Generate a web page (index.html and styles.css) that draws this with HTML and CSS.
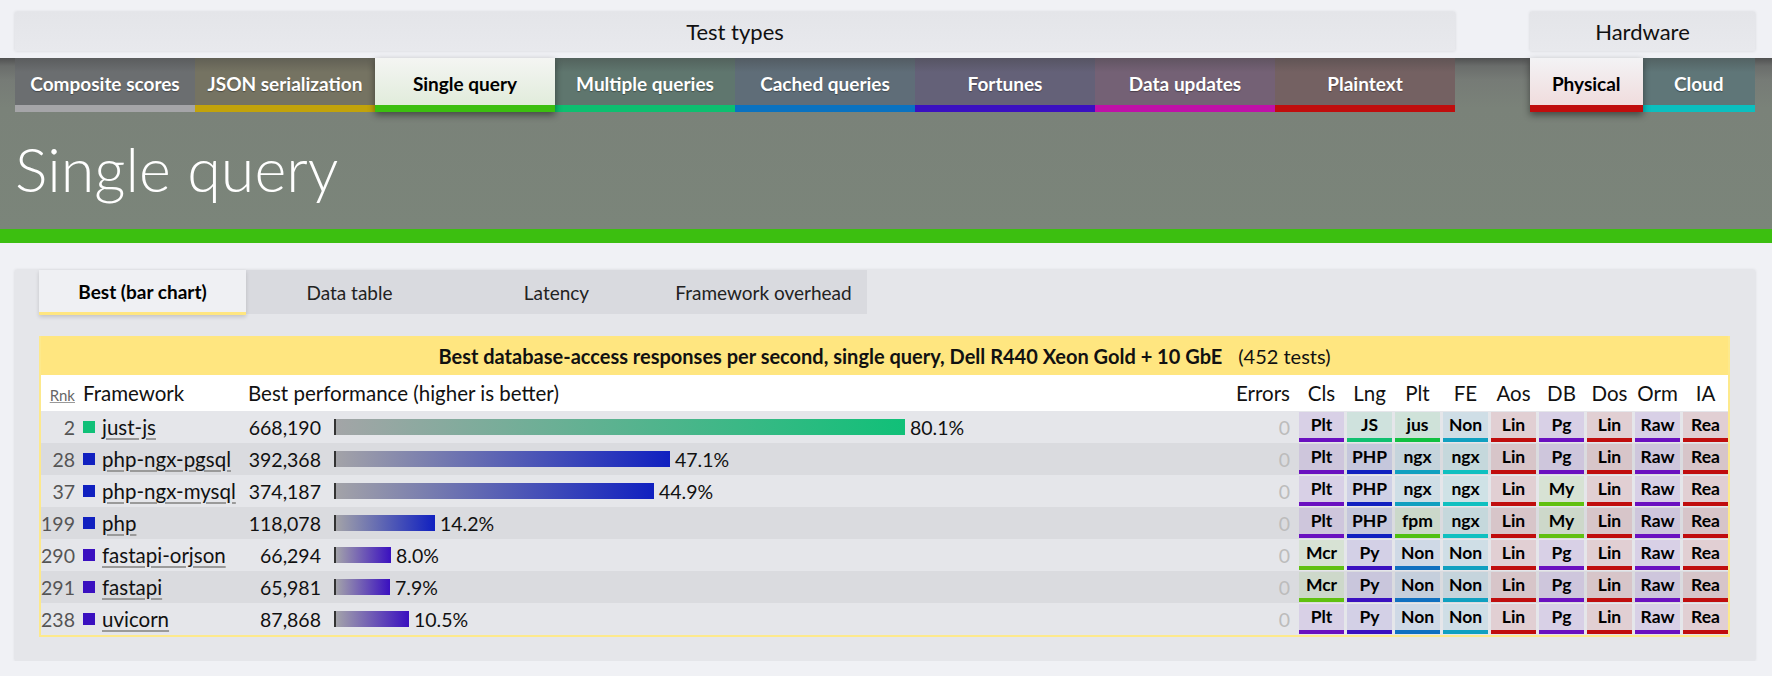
FILE: index.html
```html
<!DOCTYPE html>
<html lang="en">
<head>
<meta charset="utf-8">
<title>Single query</title>
<link rel="stylesheet" href="styles.css">
</head>
<body>
<div class="top">
  <div class="group test-types">Test types</div>
  <div class="group hardware">Hardware</div>
</div>
<div class="band">
  <nav class="tabs">
    <div class="tabset">
      <a class="tab t-composite">Composite scores</a>
      <a class="tab t-json">JSON serialization</a>
      <a class="tab t-single active">Single query</a>
      <a class="tab t-multiple">Multiple queries</a>
      <a class="tab t-cached">Cached queries</a>
      <a class="tab t-fortunes">Fortunes</a>
      <a class="tab t-updates">Data updates</a>
      <a class="tab t-plaintext">Plaintext</a>
    </div>
    <div class="tabset hw">
      <a class="tab t-physical active">Physical</a>
      <a class="tab t-cloud">Cloud</a>
    </div>
  </nav>
  <h1 class="title">Single query</h1>
</div>
<div class="greenbar"></div>

<section class="panel">
  <div class="subtabs">
    <div class="subtab active">Best (bar chart)</div>
    <div class="subtab">Data table</div>
    <div class="subtab">Latency</div>
    <div class="subtab">Framework overhead</div>
  </div>

  <div class="results">
    <div class="caption"><b>Best database-access responses per second, single query, Dell R440 Xeon Gold + 10 GbE</b><span class="count">(452 tests)</span></div>

    <div class="row head">
      <div class="rnk"><span class="rnk-label">Rnk</span></div>
      <div class="fw-head">Framework</div>
      <div class="perf-head">Best performance (higher is better)</div>
      <div class="err">Errors</div>
      <div class="badges">
        <div class="h">Cls</div><div class="h">Lng</div><div class="h">Plt</div><div class="h">FE</div><div class="h">Aos</div><div class="h">DB</div><div class="h">Dos</div><div class="h">Orm</div><div class="h">IA</div>
      </div>
    </div>

    <div class="row">
      <div class="rnk">2</div><div class="sq c-green"></div><div class="name"><a>just-js</a></div>
      <div class="val">668,190</div>
      <div class="barcell"><div class="bar g-green" style="width:571px"></div><span class="pct">80.1%</span></div>
      <div class="err zero">0</div>
      <div class="badges">
        <div class="b k-purple">Plt</div><div class="b k-js">JS</div><div class="b k-jus">jus</div><div class="b k-teal">Non</div><div class="b k-red">Lin</div><div class="b k-purple">Pg</div><div class="b k-red">Lin</div><div class="b k-purple">Raw</div><div class="b k-red">Rea</div>
      </div>
    </div>

    <div class="row">
      <div class="rnk">28</div><div class="sq c-blue"></div><div class="name"><a>php-ngx-pgsql</a></div>
      <div class="val">392,368</div>
      <div class="barcell"><div class="bar g-blue" style="width:336px"></div><span class="pct">47.1%</span></div>
      <div class="err zero">0</div>
      <div class="badges">
        <div class="b k-purple">Plt</div><div class="b k-blue">PHP</div><div class="b k-teal">ngx</div><div class="b k-cyan">ngx</div><div class="b k-red">Lin</div><div class="b k-purple">Pg</div><div class="b k-red">Lin</div><div class="b k-purple">Raw</div><div class="b k-red">Rea</div>
      </div>
    </div>

    <div class="row">
      <div class="rnk">37</div><div class="sq c-blue"></div><div class="name"><a>php-ngx-mysql</a></div>
      <div class="val">374,187</div>
      <div class="barcell"><div class="bar g-blue" style="width:320px"></div><span class="pct">44.9%</span></div>
      <div class="err zero">0</div>
      <div class="badges">
        <div class="b k-purple">Plt</div><div class="b k-blue">PHP</div><div class="b k-teal">ngx</div><div class="b k-cyan">ngx</div><div class="b k-red">Lin</div><div class="b k-lime">My</div><div class="b k-red">Lin</div><div class="b k-purple">Raw</div><div class="b k-red">Rea</div>
      </div>
    </div>

    <div class="row">
      <div class="rnk">199</div><div class="sq c-blue"></div><div class="name"><a>php</a></div>
      <div class="val">118,078</div>
      <div class="barcell"><div class="bar g-blue" style="width:101px"></div><span class="pct">14.2%</span></div>
      <div class="err zero">0</div>
      <div class="badges">
        <div class="b k-purple">Plt</div><div class="b k-blue">PHP</div><div class="b k-fpm">fpm</div><div class="b k-cyan">ngx</div><div class="b k-red">Lin</div><div class="b k-lime">My</div><div class="b k-red">Lin</div><div class="b k-purple">Raw</div><div class="b k-red">Rea</div>
      </div>
    </div>

    <div class="row">
      <div class="rnk">290</div><div class="sq c-indigo"></div><div class="name"><a>fastapi-orjson</a></div>
      <div class="val">66,294</div>
      <div class="barcell"><div class="bar g-indigo" style="width:57px"></div><span class="pct">8.0%</span></div>
      <div class="err zero">0</div>
      <div class="badges">
        <div class="b k-lime">Mcr</div><div class="b k-indigo">Py</div><div class="b k-azure">Non</div><div class="b k-teal">Non</div><div class="b k-red">Lin</div><div class="b k-purple">Pg</div><div class="b k-red">Lin</div><div class="b k-purple">Raw</div><div class="b k-red">Rea</div>
      </div>
    </div>

    <div class="row">
      <div class="rnk">291</div><div class="sq c-indigo"></div><div class="name"><a>fastapi</a></div>
      <div class="val">65,981</div>
      <div class="barcell"><div class="bar g-indigo" style="width:56px"></div><span class="pct">7.9%</span></div>
      <div class="err zero">0</div>
      <div class="badges">
        <div class="b k-lime">Mcr</div><div class="b k-indigo">Py</div><div class="b k-azure">Non</div><div class="b k-teal">Non</div><div class="b k-red">Lin</div><div class="b k-purple">Pg</div><div class="b k-red">Lin</div><div class="b k-purple">Raw</div><div class="b k-red">Rea</div>
      </div>
    </div>

    <div class="row">
      <div class="rnk">238</div><div class="sq c-indigo"></div><div class="name"><a>uvicorn</a></div>
      <div class="val">87,868</div>
      <div class="barcell"><div class="bar g-indigo" style="width:75px"></div><span class="pct">10.5%</span></div>
      <div class="err zero">0</div>
      <div class="badges">
        <div class="b k-purple">Plt</div><div class="b k-indigo">Py</div><div class="b k-azure">Non</div><div class="b k-teal">Non</div><div class="b k-red">Lin</div><div class="b k-purple">Pg</div><div class="b k-red">Lin</div><div class="b k-purple">Raw</div><div class="b k-red">Rea</div>
      </div>
    </div>
  </div>
</section>
</body>
</html>
```

FILE: styles.css
```css
* { box-sizing: border-box; }
html, body { margin: 0; padding: 0; }
body {
  background: #f0f1f5;
  font-family: "Lato", "Noto Sans", sans-serif;
  color: #111;
}

/* top group labels */
.top {
  display: flex;
  justify-content: space-between;
  padding: 12px 17px 7px 15px;
}
.group {
  height: 39px;
  line-height: 39px;
  text-align: center;
  font-size: 22px;
  background: linear-gradient(#e4e5e9, #e8e9ed);
  box-shadow: 0 0 3px rgba(0,0,0,0.12);
}
.test-types { width: 1440px; }
.hardware { width: 225px; }

/* dark band with tabs */
.band {
  background: linear-gradient(#505151 0, #6a6d6b 8px, #767b76 22px, #7a8279 50px, #7b857a 100%);
  padding: 0 17px 0 15px;
}
.tabs {
  display: flex;
  justify-content: space-between;
  height: 54px;
}
.tabset { display: flex; }
.tab {
  width: 180px;
  height: 54px;
  border-bottom: 7px solid #a5a5a8;
  display: flex;
  align-items: center;
  justify-content: center;
  padding-top: 3px;
  color: #fff;
  font-weight: 700;
  font-size: 19px;
  text-shadow: 0 1px 1px rgba(0,0,0,0.35);
  background-image: linear-gradient(rgba(60,60,60,0.35), rgba(60,60,60,0) 14px);
}
.hw .tab { width: 112.5px; }
.t-composite { background-color: #6b6e70; border-bottom-color: #a5a5a8; }
.t-json      { background-color: #757362; border-bottom-color: #c2a30b; }
.t-single    { border-bottom-color: #3cbf10; }
.t-multiple  { background-color: #5f766e; border-bottom-color: #0dbf70; }
.t-cached    { background-color: #5f6d78; border-bottom-color: #0a72c0; }
.t-fortunes  { background-color: #646178; border-bottom-color: #3a10c0; }
.t-updates   { background-color: #746175; border-bottom-color: #c010a8; }
.t-plaintext { background-color: #746162; border-bottom-color: #c00d0d; }
.t-physical  { border-bottom-color: #c00d0d; }
.t-cloud     { background-color: #5f7678; border-bottom-color: #0bbfbf; }
.tab.active {
  color: #000;
  text-shadow: none;
  position: relative;
  z-index: 1;
  box-shadow: 0 3px 7px rgba(0,0,0,0.45);
}
.t-single.active { background: linear-gradient(#f4f5f3, #e1ecdb); }
.t-physical.active { background: linear-gradient(#f3f3f5, #f0dcdd); }

.title {
  margin: 0;
  height: 117px;
  padding-top: 26px;
  font-size: 61px;
  line-height: 1;
  font-weight: 300;
  color: #fff;
}
.greenbar { height: 14px; background: #3cbf10; }

/* results panel */
.panel {
  margin: 27px 17px 0 15px;
  padding: 0 25px 24px 24px;
  background: #e5e6ea;
  box-shadow: 0 0 3px rgba(0,0,0,0.12);
}
.subtabs { display: flex; height: 45px; }
.subtab {
  width: 207px;
  height: 44px;
  background: #d9dadf;
  display: flex;
  align-items: center;
  justify-content: center;
  font-size: 19px;
  color: #222;
}
.subtab.active {
  height: 45px;
  background: #eff0f3;
  border-bottom: 3px solid #ffe680;
  font-weight: 700;
  color: #000;
  box-shadow: 0 2px 4px rgba(0,0,0,0.15);
  position: relative;
}

.results {
  margin-top: 21px;
  border: 2px solid #fde98c;
  border-top: 0;
}
.caption {
  height: 39px;
  background: #ffe680;
  display: flex;
  align-items: center;
  justify-content: center;
  font-size: 20px;
}
.caption .count { margin-left: 16px; }

.row {
  display: flex;
  align-items: center;
  height: 32px;
  font-size: 19.5px;
  background: #e5e6ea;
}
.row:nth-child(even) { background: #dadbdf; }
.row.head { height: 36px; background: #fff; font-size: 20.5px; }

.rnk { width: 34px; text-align: right; color: #555; flex: none; }
.rnk-label { font-size: 15px; color: #666; text-decoration: underline; text-decoration-color: #999; }
.fw-head { width: 165px; margin-left: 8px; flex: none; }
.perf-head { flex: 1; }
.sq { width: 12px; height: 12px; margin-left: 8px; flex: none; }
.c-green { background: #10c078; }
.c-blue { background: #1020c0; }
.c-indigo { background: #3a10c0; }
.name { width: 146px; margin-left: 7px; flex: none; white-space: nowrap; font-size: 20.5px; }
.name a {
  color: #111;
  text-decoration: underline;
  text-decoration-color: #9a9a9a;
  text-decoration-thickness: 2px;
  text-underline-offset: 3px;
}
.val { width: 73px; text-align: right; flex: none; }
.barcell { flex: 1; display: flex; align-items: center; padding-left: 13px; }
.bar { height: 16px; border-left: 2px solid #333; flex: none; }
.g-green { background: linear-gradient(to right, #a3a5a7, #10c078); }
.g-blue { background: linear-gradient(to right, #a3a3a8, #1020c0); }
.g-indigo { background: linear-gradient(to right, #a3a3aa, #3a10c0); }
.pct { margin-left: 5px; }
.err { width: 60px; text-align: right; flex: none; }
.err.zero { color: #bcbcbc; }

.badges { display: flex; gap: 3px; margin-left: 9px; flex: none; }
.h { width: 45px; text-align: center; }
.b {
  width: 45px;
  height: 30px;
  border-bottom: 4px solid;
  text-align: center;
  font-weight: 700;
  font-size: 17.5px;
  line-height: 26px;
  color: #000;
}
.k-purple { border-color: #6a10c0; background: rgba(106,16,192,0.1); }
.k-red    { border-color: #c00d0d; background: rgba(192,13,13,0.1); }
.k-js     { border-color: #10c070; background: rgba(16,192,112,0.1); }
.k-jus    { border-color: #10c040; background: rgba(16,192,64,0.1); }
.k-teal   { border-color: #10a0c0; background: rgba(16,160,192,0.1); }
.k-cyan   { border-color: #10c0c0; background: rgba(16,192,192,0.1); }
.k-blue   { border-color: #1020c0; background: rgba(16,32,192,0.1); }
.k-lime   { border-color: #60c010; background: rgba(96,192,16,0.1); }
.k-fpm    { border-color: #50c010; background: rgba(80,192,16,0.1); }
.k-indigo { border-color: #3a10c0; background: rgba(58,16,192,0.1); }
.k-azure  { border-color: #1070c0; background: rgba(16,112,192,0.1); }
```
